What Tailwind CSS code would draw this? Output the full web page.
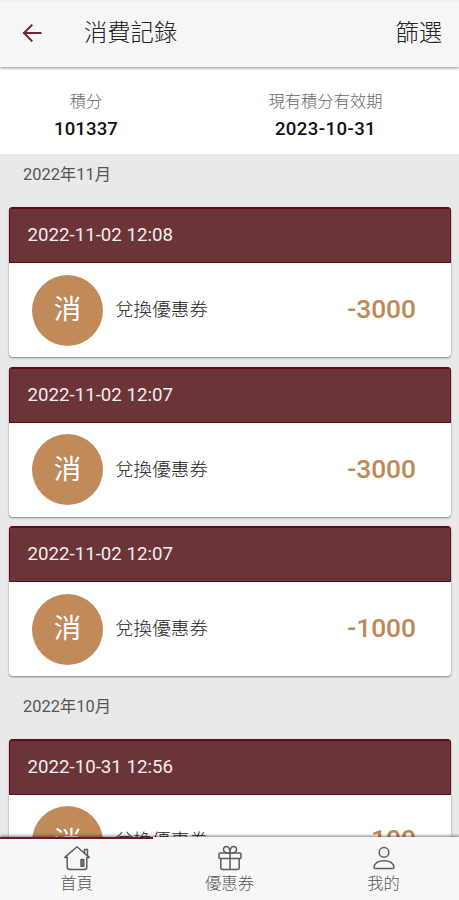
<!DOCTYPE html>
<html lang="zh-CN">
<head>
<meta charset="utf-8">
<meta name="viewport" content="width=device-width, initial-scale=1">
<title>消費記錄</title>
<script src="https://cdn.jsdelivr.net/npm/@tailwindcss/browser@4"></script>
</head>
<body class="h-[900px] overflow-hidden bg-[#e9e9e9] font-['Roboto','Noto_Sans_CJK_SC',sans-serif]">
<div class="flex h-[900px] flex-col">
  <header class="relative z-10 flex h-[67px] shrink-0 items-center border-t-2 border-[#f3f0f0] bg-[#f6f6f6] pr-[17px] pb-[3px] pl-[22px] text-[23.3px] font-light text-[#222] shadow-[0_1px_3px_rgba(0,0,0,0.45)]">
    <svg class="h-5 w-5" viewBox="0 0 20 20" fill="none" stroke="#6f2632" stroke-width="2"><path d="M19.5 10H2M10.3 1.6 1.9 10l8.4 8.4"/></svg>
    <h1 class="ml-[42px] leading-8">消費記錄</h1>
    <button class="ml-auto leading-8">篩選</button>
  </header>
  <section class="flex h-[87px] shrink-0 bg-white pt-[23px] text-center">
    <div class="w-[172px] shrink-0">
      <p class="text-[16.3px] leading-6 font-light text-[#666]">積分</p>
      <p class="mt-[3px] text-[18.6px] leading-6 font-medium tracking-[0.1px] text-[#111]">101337</p>
    </div>
    <div class="w-[287px] pl-[20px]">
      <p class="text-[16.3px] leading-6 font-light text-[#666]">現有積分有效期</p>
      <p class="mt-[3px] text-[18.6px] leading-6 font-medium tracking-[0.4px] text-[#111]">2023-10-31</p>
    </div>
  </section>
  <main class="min-h-0 flex-1 overflow-hidden pr-[8px] pl-[9px]">
    <h2 class="h-[53px] pt-[9px] pl-[14px] text-[16.4px] leading-6 text-[#555]">2022年11月</h2>
    <article class="mb-[9.5px] h-[150px] overflow-hidden rounded-[4px] bg-white shadow-[0_1px_2px_rgba(0,0,0,0.45)]">
      <div class="flex h-[56px] items-center border border-t-2 border-[#5c0e20] bg-[#6b3439] pl-[17.5px] text-[18.7px] text-[#f6eded]">2022-11-02 12:08</div>
      <div class="flex h-[94px] items-center pr-[35px] pl-[23px]">
        <span class="flex h-[71px] w-[71px] items-center justify-center rounded-full bg-[#c08a5b] text-[27.5px] text-white">消</span>
        <span class="ml-[12px] pt-[2px] text-[18.6px] font-light text-[#222]">兌換優惠券</span>
        <span class="ml-auto text-[26.3px] font-medium text-[#bd8858]">-3000</span>
      </div>
    </article>
    <article class="mb-[9.5px] h-[150px] overflow-hidden rounded-[4px] bg-white shadow-[0_1px_2px_rgba(0,0,0,0.45)]">
      <div class="flex h-[56px] items-center border border-t-2 border-[#5c0e20] bg-[#6b3439] pl-[17.5px] text-[18.7px] text-[#f6eded]">2022-11-02 12:07</div>
      <div class="flex h-[94px] items-center pr-[35px] pl-[23px]">
        <span class="flex h-[71px] w-[71px] items-center justify-center rounded-full bg-[#c08a5b] text-[27.5px] text-white">消</span>
        <span class="ml-[12px] pt-[2px] text-[18.6px] font-light text-[#222]">兌換優惠券</span>
        <span class="ml-auto text-[26.3px] font-medium text-[#bd8858]">-3000</span>
      </div>
    </article>
    <article class="mb-[9.5px] h-[150px] overflow-hidden rounded-[4px] bg-white shadow-[0_1px_2px_rgba(0,0,0,0.45)]">
      <div class="flex h-[56px] items-center border border-t-2 border-[#5c0e20] bg-[#6b3439] pl-[17.5px] text-[18.7px] text-[#f6eded]">2022-11-02 12:07</div>
      <div class="flex h-[94px] items-center pr-[35px] pl-[23px]">
        <span class="flex h-[71px] w-[71px] items-center justify-center rounded-full bg-[#c08a5b] text-[27.5px] text-white">消</span>
        <span class="ml-[12px] pt-[2px] text-[18.6px] font-light text-[#222]">兌換優惠券</span>
        <span class="ml-auto text-[26.3px] font-medium text-[#bd8858]">-1000</span>
      </div>
    </article>
    <h2 class="h-[53px] pt-[9px] pl-[14px] text-[16.4px] leading-6 text-[#555]">2022年10月</h2>
    <article class="h-[150px] overflow-hidden rounded-[4px] bg-white shadow-[0_1px_2px_rgba(0,0,0,0.45)]">
      <div class="flex h-[56px] items-center border border-t-2 border-[#5c0e20] bg-[#6b3439] pl-[17.5px] text-[18.7px] text-[#f6eded]">2022-10-31 12:56</div>
      <div class="flex h-[94px] items-center pr-[35px] pl-[23px]">
        <span class="flex h-[71px] w-[71px] items-center justify-center rounded-full bg-[#c08a5b] text-[27.5px] text-white">消</span>
        <span class="ml-[12px] text-[18.6px] font-light text-[#222]">兌換優惠券</span>
        <span class="ml-auto pb-[4px] text-[26.3px] font-medium text-[#bd8858]">-100</span>
      </div>
    </article>
  </main>
  <nav class="relative z-10 grid h-[63px] shrink-0 grid-cols-3 bg-[#f7f7f7] text-[16.3px] leading-6 font-light text-[#555] shadow-[0_-1px_3px_rgba(0,0,0,0.5)]">
    <a class="flex flex-col items-center border-t-2 border-[#6b1a28] pt-[6px]">
      <svg class="h-[27px] w-[28px]" viewBox="0 0 28 27" fill="none" stroke="#5c5c5c" stroke-width="1.5" stroke-linejoin="round" stroke-linecap="round"><path d="M1.8 12.4 14 1.7l12.2 10.7h-2.4V22q0 2.5-2.5 2.5H6.7q-2.5 0-2.5-2.5v-9.6Z"/><path d="M21.5 7.700V4.500h3v6"/><path d="M18 14.500h2.800v6.800H18Z" fill="#777"/></svg>
      <span>首頁</span>
    </a>
    <a class="flex flex-col items-center border-t-2 border-transparent pt-[6px]">
      <svg class="h-[27px] w-[28px]" viewBox="0 0 28 27" fill="none" stroke="#5c5c5c" stroke-width="1.5" stroke-linejoin="round"><rect x="3" y="8" width="22" height="5.600" rx="1.200"/><path d="M4.800 13.600v9q0 2 2 2h14.400q2 0 2-2v-9M14 8v16.600"/><path d="M14 8C9.800 8 7.500 7 7.500 4.700S9 1.300 10.600 1.500C12.700 1.700 14 4.500 14 8c0-3.500 1.300-6.300 3.400-6.500 1.600-.2 3.100.9 3.100 3.200S18.200 8 14 8Z"/></svg>
      <span>優惠券</span>
    </a>
    <a class="flex flex-col items-center border-t-2 border-transparent pt-[6px] pl-[2px]">
      <svg class="h-[27px] w-[28px]" viewBox="0 0 28 27" fill="none" stroke="#5c5c5c" stroke-width="1.5" stroke-linejoin="round"><circle cx="14" cy="7.400" r="4.800"/><path d="M4 22c.6-4 4.700-6.300 10-6.300S23.400 18 24 22q.2 1.500-1.300 1.500H5.300Q3.800 23.500 4 22Z"/></svg>
      <span>我的</span>
    </a>
  </nav>
</div>
</body>
</html>
